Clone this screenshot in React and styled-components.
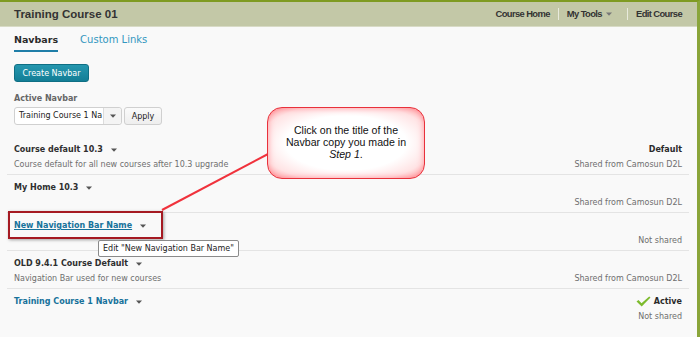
import React from "react";
import styled, { createGlobalStyle } from "styled-components";

const GlobalStyle = createGlobalStyle`
  html, body {
    margin: 0;
    padding: 0;
    background: #f9f9f9;
  }
  body {
    font-family: "DejaVu Sans", Verdana, sans-serif;
  }
`;

const Page = styled.div`
  position: relative;
  width: 700px;
  height: 337px;
  box-sizing: border-box;
  border-top: 2px solid #7f9b22;
  border-right: 3px solid #8aa53a;
  background: #f9f9f9;
  overflow: hidden;
`;

const Header = styled.header`
  display: flex;
  align-items: center;
  justify-content: space-between;
  height: 24px;
  padding: 0 15px 0 14px;
  background: #c3c8a7;
  border-bottom: 1px solid #d8dbc6;
  font-family: "Liberation Sans", Arial, sans-serif;
  font-weight: bold;
  color: #333;
`;

const CourseTitle = styled.div`
  font-size: 11.5px;
`;

const HeaderLinks = styled.nav`
  display: flex;
  align-items: center;
  font-size: 9.4px;
  letter-spacing: -0.6px;
`;

const HeaderLink = styled.span`
  display: flex;
  align-items: center;
  gap: 4px;
  padding: 0 ${(p) => (p.$last ? 0 : 8)}px 0 ${(p) => (p.$first ? 0 : 8)}px;
  border-left: ${(p) => (p.$first ? "none" : "1px solid #e8eadc")};
  line-height: 12px;
`;

const Tabs = styled.div`
  display: flex;
  gap: 22px;
  padding: 6px 14px 0;
`;

const Tab = styled.div`
  font-size: ${(p) => (p.$active ? 9.5 : 10)}px;
  font-weight: ${(p) => (p.$active ? "bold" : "normal")};
  color: ${(p) => (p.$active ? "#2b2b2b" : "#3297bf")};
  padding: 0 0 3px;
  border-bottom: 2px solid ${(p) => (p.$active ? "#1f7ea8" : "transparent")};
  line-height: 14px;
`;

const Controls = styled.div`
  display: flex;
  flex-direction: column;
  align-items: flex-start;
  padding: 12px 14px 0;
`;

const PrimaryButton = styled.button`
  height: 18px;
  width: 75px;
  padding: 0;
  border: 1px solid #0f6f84;
  border-radius: 3px;
  background: linear-gradient(#2597af, #137e96);
  color: #fff;
  font-family: "DejaVu Sans", Verdana, sans-serif;
  font-size: 8px;
`;

const Label = styled.div`
  margin-top: 11px;
  font-size: 8px;
  font-weight: bold;
  color: #666;
  line-height: 12px;
`;

const SelectRow = styled.div`
  display: flex;
  gap: 2px;
  margin-top: 2px;
`;

const Select = styled.div`
  display: flex;
  width: 108px;
  height: 18px;
  box-sizing: border-box;
  border: 1px solid #d0d0d0;
  border-radius: 3px;
  background: #fff;
  font-size: 8px;
  color: #222;
`;

const SelectText = styled.div`
  flex: 1;
  padding-left: 4px;
  line-height: 16px;
  white-space: nowrap;
  overflow: hidden;
`;

const SelectArrow = styled.div`
  display: flex;
  align-items: center;
  justify-content: center;
  width: 17px;
  border-left: 1px solid #dcdcdc;
  background: #f4f4f4;
  border-radius: 0 3px 3px 0;
`;

const GhostButton = styled.button`
  width: 38px;
  height: 18px;
  padding: 0;
  border: 1px solid #d0d0d0;
  border-radius: 3px;
  background: linear-gradient(#fbfbfb, #eeeeee);
  font-family: "DejaVu Sans", Verdana, sans-serif;
  font-size: 8px;
  color: #222;
`;

const List = styled.div`
  margin: 12px 8px 0 7px;
`;

const Row = styled.div`
  display: flex;
  justify-content: space-between;
  padding: 5px 7px 2px;
  border-bottom: ${(p) => (p.$last ? "none" : "1px solid #e4e4e4")};
  line-height: 15px;
  font-size: 8px;
`;

const Col = styled.div`
  display: flex;
  flex-direction: column;
  align-items: ${(p) => (p.$right ? "flex-end" : "flex-start")};
`;

const Line = styled.div`
  height: 15px;
  display: flex;
  align-items: center;
  gap: 8px;
  white-space: nowrap;
`;

const Title = styled.span`
  font-weight: bold;
  color: ${(p) => (p.$link ? "#17729b" : "#2f2f2f")};
  text-decoration: ${(p) => (p.$underline ? "underline" : "none")};
`;

const Desc = styled.span`
  color: #6e6e6e;
`;

const Status = styled.span`
  font-weight: bold;
  color: #2a2a2a;
  display: flex;
  align-items: center;
  gap: 3px;
`;

const Highlight = styled.div`
  position: absolute;
  left: 8px;
  top: 209px;
  width: 151px;
  height: 24px;
  border: 2px solid #a51a22;
  box-shadow: 1px 1px 3px rgba(0, 0, 0, 0.35);
`;

const Tooltip = styled.div`
  position: absolute;
  left: 98px;
  top: 238px;
  padding: 0 4px;
  height: 15px;
  line-height: 15px;
  border: 1px solid #8a8a8a;
  border-radius: 2px;
  background: #fff;
  font-size: 8px;
  color: #222;
  white-space: nowrap;
`;

const Callout = styled.div`
  position: absolute;
  left: 267px;
  top: 105px;
  width: 158px;
  height: 72px;
  box-sizing: border-box;
  border: 1.5px solid #e8313b;
  border-radius: 15px;
  background: radial-gradient(ellipse at center, #ffffff 55%, #ffe3e4 80%, #ff9ea3 100%);
  box-shadow: inset 0 0 6px rgba(255, 70, 80, 0.5);
  display: flex;
  align-items: center;
  justify-content: center;
  text-align: center;
  font-family: "Liberation Sans", Arial, sans-serif;
  font-size: 10.6px;
  line-height: 12px;
  color: #111;
  padding-bottom: 2px;
`;

const Pointer = styled.svg`
  position: absolute;
  left: 0;
  top: 0;
  pointer-events: none;
`;

const Caret = () => (
  <svg width="6" height="4" viewBox="0 0 6 4">
    <path d="M0 0.5h6L3 3.8z" fill="#555" />
  </svg>
);

const Check = () => (
  <svg width="15" height="11" viewBox="0 0 15 11">
    <path d="M0.5 5.5L2.5 4L5.5 7.2L13.2 0.5L14.5 1.6L5.7 10.5z" fill="#7dbb2d" />
  </svg>
);

const navbars = [
  {
    title: "Course default 10.3",
    desc: "Course default for all new courses after 10.3 upgrade",
    status: "Default",
    share: "Shared from Camosun D2L",
  },
  { title: "My Home 10.3", share: "Shared from Camosun D2L" },
  { title: "New Navigation Bar Name", link: true, underline: true, share: "Not shared" },
  {
    title: "OLD 9.4.1 Course Default",
    desc: "Navigation Bar used for new courses",
    share: "Shared from Camosun D2L",
  },
  { title: "Training Course 1 Navbar", link: true, active: true, share: "Not shared" },
];

export default function App() {
  return (
    <Page>
      <GlobalStyle />
      <Header>
        <CourseTitle>Training Course 01</CourseTitle>
        <HeaderLinks>
          <HeaderLink $first>Course Home</HeaderLink>
          <HeaderLink>
            My Tools
            <svg width="6" height="4" viewBox="0 0 6 4">
              <path d="M0 0.5h6L3 3.8z" fill="#777" />
            </svg>
            <span style={{ width: 3 }} />
          </HeaderLink>
          <HeaderLink $last>Edit Course</HeaderLink>
        </HeaderLinks>
      </Header>

      <Tabs>
        <Tab $active>Navbars</Tab>
        <Tab>Custom Links</Tab>
      </Tabs>

      <Controls>
        <PrimaryButton>Create Navbar</PrimaryButton>
        <Label>Active Navbar</Label>
        <SelectRow>
          <Select>
            <SelectText>Training Course 1 Na</SelectText>
            <SelectArrow>
              <Caret />
            </SelectArrow>
          </Select>
          <GhostButton>Apply</GhostButton>
        </SelectRow>
      </Controls>

      <List>
        {navbars.map((n, i) => (
          <Row key={n.title} $last={i === navbars.length - 1}>
            <Col>
              <Line>
                <Title $link={n.link} $underline={n.underline}>
                  {n.title}
                </Title>
                <Caret />
              </Line>
              <Line>{n.desc && <Desc>{n.desc}</Desc>}</Line>
            </Col>
            <Col $right>
              <Line>
                {n.status && <Status>{n.status}</Status>}
                {n.active && (
                  <Status>
                    <Check />
                    Active
                  </Status>
                )}
              </Line>
              <Line>
                <Desc>{n.share}</Desc>
              </Line>
            </Col>
          </Row>
        ))}
      </List>

      <Highlight />
      <Tooltip>Edit "New Navigation Bar Name"</Tooltip>

      <Pointer width="700" height="337">
        <line x1="270" y1="151" x2="162" y2="208" stroke="#f0323c" strokeWidth="2" />
      </Pointer>
      <Callout>
        <div>
          Click on the title of the
          <br />
          Navbar copy you made in
          <br />
          <i>Step 1</i>.
        </div>
      </Callout>
    </Page>
  );
}
